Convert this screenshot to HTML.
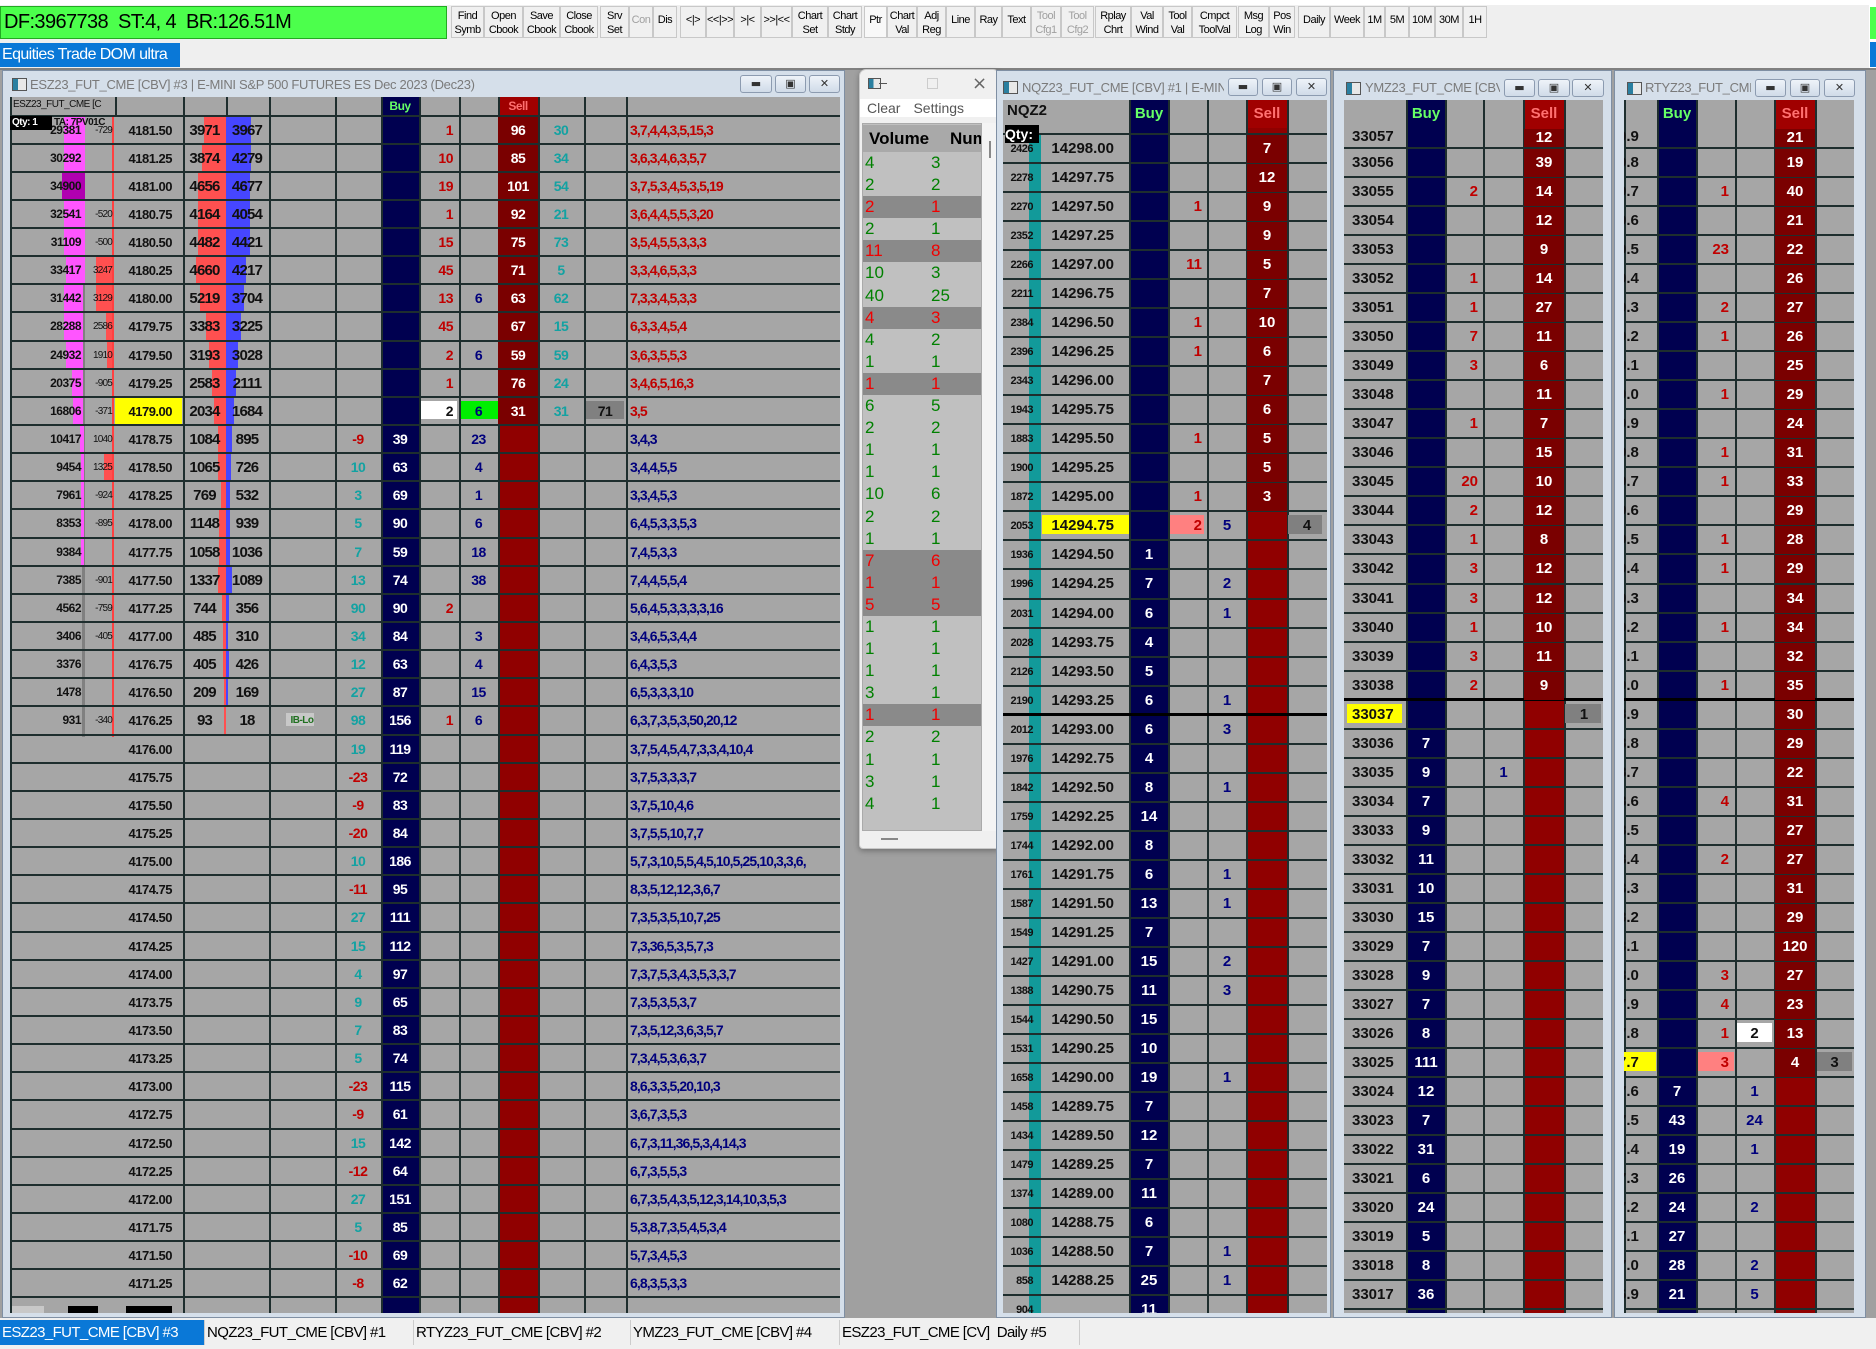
<!DOCTYPE html>
<html><head><meta charset="utf-8">
<style>
*{margin:0;padding:0}
body{width:1876px;height:1349px;position:relative;overflow:hidden;background:#efefef;font-family:"Liberation Sans",sans-serif}
.abs{position:absolute}
.tb{position:absolute;top:6px;height:32px;border:1px solid #c8c8c8;box-sizing:border-box;background:#f0f0f0;font:11px/14px "Liberation Sans",sans-serif;text-align:center;color:#000;padding-top:2px;overflow:hidden;letter-spacing:-0.5px;white-space:nowrap}
.tb.gr{color:#a0a0a0}
.tb.one{line-height:26px;padding-top:0}
.frame{position:absolute;background:#d5dfea;border:1px solid #7f8fa3;box-sizing:border-box}
.ttl{position:absolute;font:13px "Liberation Sans",sans-serif;color:#7a7a7a;white-space:nowrap;overflow:hidden;letter-spacing:-0.3px}
.ico{position:absolute;width:13px;height:11px;border:1px solid #555;background:linear-gradient(90deg,#2a7fa0 40%,#e8e8e8 40%)}
.wb{position:absolute;height:18px;border:1px solid #8c9bb0;border-radius:3px;background:linear-gradient(#eef3f9,#d0dbe8);box-sizing:border-box;font:bold 11px/16px "DejaVu Sans",sans-serif;text-align:center;color:#333}
.g{position:absolute;overflow:hidden;background:#a6a6a6;font-family:"Liberation Sans",sans-serif;font-weight:bold;color:#111;letter-spacing:-0.5px}
.v{position:absolute;top:0;bottom:0;width:2px;background:#1e2e2e}
.cb{position:absolute;top:0;bottom:0}
.rows{position:absolute;left:0;right:0}
.r{position:relative;height:28.15px;box-sizing:border-box;border-bottom:2px solid #1e2e2e}
.q{position:relative;height:29.04px;box-sizing:border-box;border-bottom:2px solid #1e2e2e}
.r b,.q b{position:absolute;top:0;line-height:27px;font-size:14px;white-space:nowrap}
.q b{line-height:28px;font-size:15px;letter-spacing:0}
s{position:absolute;top:0;bottom:0;display:block;text-decoration:none}
.mg{background:#ff55ff}.rb{background:#ff5050}.bb{background:#4646ff}
.rd{color:#c00000}.tl{color:#13a2a2}.nv{color:#00007c}.w{color:#fff}
.m0{left:0;width:71px;text-align:right;font-size:12px!important}
.m1{left:73px;width:29px;text-align:right;font-size:10px!important;font-weight:normal;letter-spacing:-0.8px}
.m2{left:103px;width:59px;text-align:right;font-size:13px!important}
.m3{left:173px;width:43px;text-align:center;font-size:15px!important;letter-spacing:-0.8px}
.m4{left:217px;width:40px;text-align:center;font-size:15px!important;letter-spacing:-0.8px}
.m5{left:259px;width:66px;text-align:center}
.m6{left:325px;width:46px;text-align:center}
.m7{left:371px;width:38px;text-align:center}
.m8{left:409px;width:34px;text-align:right}
.m9{left:449px;width:39px;text-align:center}
.m10{left:488px;width:40px;text-align:center;top:0;bottom:0}
.m11{left:528px;width:46px;text-align:center}
.m12{left:574px;width:42px;text-align:center}
.m13{left:620px;width:210px;text-align:left;overflow:hidden;letter-spacing:-0.9px}
.sv{background:#7a0000}
.n0{left:0;width:30px;text-align:right;font-size:11px!important;letter-spacing:-0.5px!important}
.n1{left:38px;width:73px;text-align:right;font-size:15px!important}
.n2{left:127px;width:38px;text-align:center}
.n3{left:166px;width:33px;text-align:right}
.n4{left:204px;width:40px;text-align:center}
.n5{left:244px;width:40px;text-align:center}
.n6{left:284px;width:40px;text-align:center}
.y0{left:8px;width:55px;text-align:left;font-size:15px!important}
.y1{left:63px;width:38px;text-align:center}
.y2{left:102px;width:32px;text-align:right}
.y3{left:140px;width:39px;text-align:center}
.y4{left:180px;width:40px;text-align:center}
.y5{left:221px;width:38px;text-align:center}
.t0{left:-6px;width:40px;text-align:left;font-size:15px!important}
.t1{left:34px;width:38px;text-align:center}
.t2{left:73px;width:32px;text-align:right}
.t3{left:111px;width:39px;text-align:center}
.t4{left:151px;width:40px;text-align:center}
.t5{left:191px;width:39px;text-align:center}
.pl{height:22.1px;font:17px/22px "Liberation Sans",sans-serif;color:#008000;background:#c0c0c0;position:relative}
.pl.d{background:#8a8a8a;color:#f00000}
.pl span{position:absolute;left:2px}
.pl span+span{left:68px}
.tab{position:absolute;top:1320px;height:25px;font:15px/25px "Liberation Sans",sans-serif;letter-spacing:-0.6px;border-right:1px solid #ccc;box-sizing:border-box;white-space:nowrap;overflow:hidden;padding-left:2px}
</style></head><body>

<div class="abs" style="left:0;top:0;width:1876px;height:5px;background:#fff"></div>
<div class="abs" style="left:0;top:6px;width:447px;height:33px;background:#4cff4c;border:1px solid #2a2;box-sizing:border-box;font:20px/31px 'Liberation Sans',sans-serif;letter-spacing:-0.6px;padding-left:3px">DF:3967738&nbsp; ST:4, 4&nbsp; BR:126.51M</div>
<div class="tb" style="left:451px;width:33px">Find<br>Symb</div>
<div class="tb" style="left:484px;width:39px">Open<br>Cbook</div>
<div class="tb" style="left:523px;width:37px">Save<br>Cbook</div>
<div class="tb" style="left:560px;width:38px">Close<br>Cbook</div>
<div class="tb" style="left:600px;width:29px">Srv<br>Set</div>
<div class="tb gr one" style="left:629px;width:24px">Con</div>
<div class="tb one" style="left:653px;width:24px">Dis</div>
<div class="tb one" style="left:680px;width:26px">&lt;|&gt;</div>
<div class="tb one" style="left:706px;width:28px">&lt;&lt;|&gt;&gt;</div>
<div class="tb one" style="left:734px;width:27px">&gt;|&lt;</div>
<div class="tb one" style="left:761px;width:31px">&gt;&gt;|&lt;&lt;</div>
<div class="tb" style="left:792px;width:36px">Chart<br>Set</div>
<div class="tb" style="left:828px;width:34px">Chart<br>Stdy</div>
<div class="tb one" style="left:864px;width:23px;background:#f8f8f8">Ptr</div>
<div class="tb" style="left:887px;width:30px">Chart<br>Val</div>
<div class="tb" style="left:917px;width:29px">Adj<br>Reg</div>
<div class="tb one" style="left:946px;width:29px">Line</div>
<div class="tb one" style="left:975px;width:27px">Ray</div>
<div class="tb one" style="left:1002px;width:29px">Text</div>
<div class="tb gr" style="left:1031px;width:30px">Tool<br>Cfg1</div>
<div class="tb gr" style="left:1061px;width:33px">Tool<br>Cfg2</div>
<div class="tb" style="left:1095px;width:36px">Rplay<br>Chrt</div>
<div class="tb" style="left:1131px;width:32px">Val<br>Wind</div>
<div class="tb" style="left:1163px;width:29px">Tool<br>Val</div>
<div class="tb" style="left:1192px;width:45px">Cmpct<br>ToolVal</div>
<div class="tb" style="left:1238px;width:31px">Msg<br>Log</div>
<div class="tb" style="left:1269px;width:26px">Pos<br>Win</div>
<div class="tb one" style="left:1298px;width:32px">Daily</div>
<div class="tb one" style="left:1330px;width:34px">Week</div>
<div class="tb one" style="left:1364px;width:21px">1M</div>
<div class="tb one" style="left:1385px;width:24px">5M</div>
<div class="tb one" style="left:1409px;width:26px">10M</div>
<div class="tb one" style="left:1435px;width:28px">30M</div>
<div class="tb one" style="left:1463px;width:24px">1H</div>
<div class="abs" style="left:0;top:43px;width:180px;height:24px;background:#0a78d7;color:#fff;font:16px/24px 'Liberation Sans',sans-serif;letter-spacing:-0.6px;padding-left:2px;white-space:nowrap;overflow:hidden;box-sizing:border-box">Equities Trade DOM ultra</div>
<div class="abs" style="left:1869px;top:0;width:7px;height:68px;background:#fff"></div>
<div class="abs" style="left:1870px;top:7px;width:6px;height:32px;background:#4cff4c"></div>
<div class="abs" style="left:1870px;top:42px;width:6px;height:25px;background:#0a78d7"></div>

<div class="abs" style="left:0;top:68px;width:1876px;height:1250px;background:#a0a0a0;border-top:2px solid #808080"></div>

<!-- MAIN WINDOW -->
<div class="frame" style="left:2px;top:70px;width:843px;height:1248px"></div>
<div class="ico" style="left:12px;top:78px"></div>
<div class="ttl" style="left:30px;top:77px;width:700px">ESZ23_FUT_CME [CBV] #3 | E-MINI S&amp;P 500 FUTURES ES Dec 2023 (Dec23)</div>
<div class="wb" style="left:740px;top:75px;width:32px">&#9644;</div>
<div class="wb" style="left:775px;top:75px;width:31px">&#9635;</div>
<div class="wb" style="left:809px;top:75px;width:31px">&#10005;</div>

<div class="g" style="left:10px;top:97px;width:830px;height:1216px">
 <div class="cb" style="left:371px;width:38px;background:#000050"></div>
 <div class="cb" style="left:488px;width:40px;background:#900000"></div>
 <div class="abs" style="left:488px;top:0;width:40px;height:18px;background:#a00000;color:#ff7070;font-size:12px;line-height:18px;text-align:center">Sell</div>
 <div class="abs" style="left:371px;top:0;width:38px;height:18px;color:#66ff66;font-size:12px;line-height:18px;text-align:center">Buy</div>
 <div class="abs" style="left:0;top:0;width:830px;height:18px;border-bottom:2px solid #1e2e2e"></div>
 <div class="abs" style="left:3px;top:1px;font-size:10px;line-height:14px;font-weight:normal">ESZ23_FUT_CME [C</div>
 <div class="abs" style="left:102px;top:19.5px;width:2px;height:620px;background:#ff4040"></div>
 <div class="abs" style="left:72px;top:19.5px;width:3px;height:620px;background:#808080"></div>
 <div class="v" style="left:0"></div><div class="v" style="left:173px"></div><div class="v" style="left:259px"></div><div class="v" style="left:325px"></div><div class="v" style="left:371px"></div><div class="v" style="left:409px"></div><div class="v" style="left:449px"></div><div class="v" style="left:488px"></div><div class="v" style="left:528px"></div><div class="v" style="left:574px"></div><div class="v" style="left:616px"></div>
 <div class="abs" style="left:105px;top:0;width:2px;height:18px;background:#1e2e2e"></div>
 <div class="abs" style="left:216px;top:0;width:2px;height:18px;background:#1e2e2e"></div>
 <div class="rows" style="top:19.5px">
<div class="r"><s class="mg" style="left:54px;width:21px"></s><s class="rb" style="left:194px;width:22px"></s><s class="bb" style="left:216px;width:25px"></s><b class="m0">29381</b><b class="m1">-729</b><b class="m2">4181.50</b><b class="m3">3971</b><b class="m4">3967</b><b class="m8 rd">1</b><b class="m10 w sv">96</b><b class="m11 tl">30</b><b class="m13 rd">3,7,4,4,3,5,15,3</b></div>
<div class="r"><s class="mg" style="left:54px;width:21px"></s><s class="rb" style="left:192px;width:24px"></s><s class="bb" style="left:216px;width:25px"></s><b class="m0">30292</b><b class="m2">4181.25</b><b class="m3">3874</b><b class="m4">4279</b><b class="m8 rd">10</b><b class="m10 w sv">85</b><b class="m11 tl">34</b><b class="m13 rd">3,6,3,4,6,3,5,7</b></div>
<div class="r"><s style="left:52px;width:23px;background:#b000b0"></s><s class="rb" style="left:188px;width:28px"></s><s class="bb" style="left:216px;width:24px"></s><b class="m0">34900</b><b class="m2">4181.00</b><b class="m3">4656</b><b class="m4">4677</b><b class="m8 rd">19</b><b class="m10 w sv">101</b><b class="m11 tl">54</b><b class="m13 rd">3,7,5,3,4,5,3,5,19</b></div>
<div class="r"><s class="mg" style="left:54px;width:21px"></s><s class="rb" style="left:188px;width:28px"></s><s class="bb" style="left:216px;width:24px"></s><b class="m0">32541</b><b class="m1">-520</b><b class="m2">4180.75</b><b class="m3">4164</b><b class="m4">4054</b><b class="m8 rd">1</b><b class="m10 w sv">92</b><b class="m11 tl">21</b><b class="m13 rd">3,6,4,4,5,5,3,20</b></div>
<div class="r"><s class="mg" style="left:54px;width:21px"></s><s class="rb" style="left:188px;width:28px"></s><s class="bb" style="left:216px;width:24px"></s><b class="m0">31109</b><b class="m1">-500</b><b class="m2">4180.50</b><b class="m3">4482</b><b class="m4">4421</b><b class="m8 rd">15</b><b class="m10 w sv">75</b><b class="m11 tl">73</b><b class="m13 rd">3,5,4,5,5,3,3,3</b></div>
<div class="r"><s class="mg" style="left:56px;width:19px"></s><s class="rb" style="left:86px;width:16px"></s><s class="rb" style="left:186px;width:30px"></s><s class="bb" style="left:216px;width:20px"></s><b class="m0">33417</b><b class="m1">3247</b><b class="m2">4180.25</b><b class="m3">4660</b><b class="m4">4217</b><b class="m8 rd">45</b><b class="m10 w sv">71</b><b class="m11 tl">5</b><b class="m13 rd">3,3,4,6,5,3,3</b></div>
<div class="r"><s class="mg" style="left:54px;width:19px"></s><s class="rb" style="left:86px;width:16px"></s><s class="rb" style="left:190px;width:26px"></s><s class="bb" style="left:216px;width:18px"></s><b class="m0">31442</b><b class="m1">3129</b><b class="m2">4180.00</b><b class="m3">5219</b><b class="m4">3704</b><b class="m8 rd">13</b><b class="m9 nv">6</b><b class="m10 w sv">63</b><b class="m11 tl">62</b><b class="m13 rd">7,3,3,4,5,3,3</b></div>
<div class="r"><s class="mg" style="left:54px;width:19px"></s><s class="rb" style="left:96px;width:6px"></s><s class="rb" style="left:196px;width:20px"></s><s class="bb" style="left:216px;width:15px"></s><b class="m0">28288</b><b class="m1">2586</b><b class="m2">4179.75</b><b class="m3">3383</b><b class="m4">3225</b><b class="m8 rd">45</b><b class="m10 w sv">67</b><b class="m11 tl">15</b><b class="m13 rd">6,3,3,4,5,4</b></div>
<div class="r"><s class="mg" style="left:56px;width:17px"></s><s class="rb" style="left:97px;width:5px"></s><s class="rb" style="left:199px;width:17px"></s><s class="bb" style="left:216px;width:12px"></s><b class="m0">24932</b><b class="m1">1910</b><b class="m2">4179.50</b><b class="m3">3193</b><b class="m4">3028</b><b class="m8 rd">2</b><b class="m9 nv">6</b><b class="m10 w sv">59</b><b class="m11 tl">59</b><b class="m13 rd">3,6,3,5,5,3</b></div>
<div class="r"><s class="mg" style="left:62px;width:11px"></s><s class="rb" style="left:202px;width:14px"></s><s class="bb" style="left:216px;width:10px"></s><b class="m0">20375</b><b class="m1">-905</b><b class="m2">4179.25</b><b class="m3">2583</b><b class="m4">2111</b><b class="m8 rd">1</b><b class="m10 w sv">76</b><b class="m11 tl">24</b><b class="m13 rd">3,4,6,5,16,3</b></div>
<div class="r"><s class="mg" style="left:63px;width:10px"></s><s class="rb" style="left:204px;width:12px"></s><s class="bb" style="left:216px;width:8px"></s><s style="left:105px;width:67px;background:#ffff00"></s><s style="left:411px;width:36px;top:3px;bottom:5px;background:#fff"></s><s style="left:451px;width:37px;top:3px;bottom:5px;background:#00ee00"></s><s style="left:576px;width:38px;top:3px;bottom:5px;background:#808080"></s><b class="m0">16806</b><b class="m1">-371</b><b class="m2">4179.00</b><b class="m3">2034</b><b class="m4">1684</b><b class="m8">2</b><b class="m9 nv">6</b><b class="m10 w sv">31</b><b class="m11 tl">31</b><b class="m12">71</b><b class="m13 rd">3,5</b></div>
<div class="r"><s class="mg" style="left:70px;width:4px"></s><s class="rb" style="left:208px;width:8px"></s><s class="bb" style="left:216px;width:6px"></s><b class="m0">10417</b><b class="m1">1040</b><b class="m2">4178.75</b><b class="m3">1084</b><b class="m4">895</b><b class="m6 rd">-9</b><b class="m7 w">39</b><b class="m9 nv">23</b><b class="m13 nv">3,4,3</b></div>
<div class="r"><s class="mg" style="left:71px;width:3px"></s><s class="rb" style="left:94px;width:8px"></s><s class="rb" style="left:208px;width:8px"></s><s class="bb" style="left:216px;width:5px"></s><b class="m0">9454</b><b class="m1">1325</b><b class="m2">4178.50</b><b class="m3">1065</b><b class="m4">726</b><b class="m6 tl">10</b><b class="m7 w">63</b><b class="m9 nv">4</b><b class="m13 nv">3,4,4,5,5</b></div>
<div class="r"><s class="mg" style="left:71px;width:3px"></s><s class="rb" style="left:211px;width:5px"></s><s class="bb" style="left:216px;width:4px"></s><b class="m0">7961</b><b class="m1">-924</b><b class="m2">4178.25</b><b class="m3">769</b><b class="m4">532</b><b class="m6 tl">3</b><b class="m7 w">69</b><b class="m9 nv">1</b><b class="m13 nv">3,3,4,5,3</b></div>
<div class="r"><s class="mg" style="left:71px;width:3px"></s><s class="rb" style="left:209px;width:7px"></s><s class="bb" style="left:216px;width:4px"></s><b class="m0">8353</b><b class="m1">-895</b><b class="m2">4178.00</b><b class="m3">1148</b><b class="m4">939</b><b class="m6 tl">5</b><b class="m7 w">90</b><b class="m9 nv">6</b><b class="m13 nv">6,4,5,3,3,5,3</b></div>
<div class="r"><s class="mg" style="left:71px;width:3px"></s><s class="rb" style="left:209px;width:7px"></s><s class="bb" style="left:216px;width:4px"></s><b class="m0">9384</b><b class="m2">4177.75</b><b class="m3">1058</b><b class="m4">1036</b><b class="m6 tl">7</b><b class="m7 w">59</b><b class="m9 nv">18</b><b class="m13 nv">7,4,5,3,3</b></div>
<div class="r"><s class="rb" style="left:208px;width:8px"></s><s class="bb" style="left:216px;width:6px"></s><b class="m0">7385</b><b class="m1">-901</b><b class="m2">4177.50</b><b class="m3">1337</b><b class="m4">1089</b><b class="m6 tl">13</b><b class="m7 w">74</b><b class="m9 nv">38</b><b class="m13 nv">7,4,4,5,5,4</b></div>
<div class="r"><s class="rb" style="left:212px;width:4px"></s><s class="bb" style="left:216px;width:3px"></s><b class="m0">4562</b><b class="m1">-759</b><b class="m2">4177.25</b><b class="m3">744</b><b class="m4">356</b><b class="m6 tl">90</b><b class="m7 w">90</b><b class="m8 rd">2</b><b class="m13 nv">5,6,4,5,3,3,3,3,16</b></div>
<div class="r"><s class="rb" style="left:213px;width:3px"></s><s class="bb" style="left:216px;width:2px"></s><b class="m0">3406</b><b class="m1">-405</b><b class="m2">4177.00</b><b class="m3">485</b><b class="m4">310</b><b class="m6 tl">34</b><b class="m7 w">84</b><b class="m9 nv">3</b><b class="m13 nv">3,4,6,5,3,4,4</b></div>
<div class="r"><s class="rb" style="left:213px;width:3px"></s><s class="bb" style="left:216px;width:3px"></s><b class="m0">3376</b><b class="m2">4176.75</b><b class="m3">405</b><b class="m4">426</b><b class="m6 tl">12</b><b class="m7 w">63</b><b class="m9 nv">4</b><b class="m13 nv">6,4,3,5,3</b></div>
<div class="r"><s class="rb" style="left:214px;width:2px"></s><s class="bb" style="left:216px;width:2px"></s><b class="m0">1478</b><b class="m2">4176.50</b><b class="m3">209</b><b class="m4">169</b><b class="m6 tl">27</b><b class="m7 w">87</b><b class="m9 nv">15</b><b class="m13 nv">6,5,3,3,3,10</b></div>
<div class="r"><s class="rb" style="left:214px;width:2px"></s><s style="left:276px;width:28px;top:6px;bottom:8px;background:#c8c8c8"></s><b class="m0">931</b><b class="m1">-340</b><b class="m2">4176.25</b><b class="m3">93</b><b class="m4">18</b><b class="m5" style="font-size:10px;color:#207020">IB-Lo</b><b class="m6 tl">98</b><b class="m7 w">156</b><b class="m8 rd">1</b><b class="m9 nv">6</b><b class="m13 nv">6,3,7,3,5,3,50,20,12</b></div>
<div class="r"><b class="m2">4176.00</b><b class="m6 tl">19</b><b class="m7 w">119</b><b class="m13 nv">3,7,5,4,5,4,7,3,3,4,10,4</b></div>
<div class="r"><b class="m2">4175.75</b><b class="m6 rd">-23</b><b class="m7 w">72</b><b class="m13 nv">3,7,5,3,3,3,7</b></div>
<div class="r"><b class="m2">4175.50</b><b class="m6 rd">-9</b><b class="m7 w">83</b><b class="m13 nv">3,7,5,10,4,6</b></div>
<div class="r"><b class="m2">4175.25</b><b class="m6 rd">-20</b><b class="m7 w">84</b><b class="m13 nv">3,7,5,5,10,7,7</b></div>
<div class="r"><b class="m2">4175.00</b><b class="m6 tl">10</b><b class="m7 w">186</b><b class="m13 nv">5,7,3,10,5,5,4,5,10,5,25,10,3,3,6,</b></div>
<div class="r"><b class="m2">4174.75</b><b class="m6 rd">-11</b><b class="m7 w">95</b><b class="m13 nv">8,3,5,12,12,3,6,7</b></div>
<div class="r"><b class="m2">4174.50</b><b class="m6 tl">27</b><b class="m7 w">111</b><b class="m13 nv">7,3,5,3,5,10,7,25</b></div>
<div class="r"><b class="m2">4174.25</b><b class="m6 tl">15</b><b class="m7 w">112</b><b class="m13 nv">7,3,36,5,3,5,7,3</b></div>
<div class="r"><b class="m2">4174.00</b><b class="m6 tl">4</b><b class="m7 w">97</b><b class="m13 nv">7,3,7,5,3,4,3,5,3,3,7</b></div>
<div class="r"><b class="m2">4173.75</b><b class="m6 tl">9</b><b class="m7 w">65</b><b class="m13 nv">7,3,5,3,5,3,7</b></div>
<div class="r"><b class="m2">4173.50</b><b class="m6 tl">7</b><b class="m7 w">83</b><b class="m13 nv">7,3,5,12,3,6,3,5,7</b></div>
<div class="r"><b class="m2">4173.25</b><b class="m6 tl">5</b><b class="m7 w">74</b><b class="m13 nv">7,3,4,5,3,6,3,7</b></div>
<div class="r"><b class="m2">4173.00</b><b class="m6 rd">-23</b><b class="m7 w">115</b><b class="m13 nv">8,6,3,3,5,20,10,3</b></div>
<div class="r"><b class="m2">4172.75</b><b class="m6 rd">-9</b><b class="m7 w">61</b><b class="m13 nv">3,6,7,3,5,3</b></div>
<div class="r"><b class="m2">4172.50</b><b class="m6 tl">15</b><b class="m7 w">142</b><b class="m13 nv">6,7,3,11,36,5,3,4,14,3</b></div>
<div class="r"><b class="m2">4172.25</b><b class="m6 rd">-12</b><b class="m7 w">64</b><b class="m13 nv">6,7,3,5,5,3</b></div>
<div class="r"><b class="m2">4172.00</b><b class="m6 tl">27</b><b class="m7 w">151</b><b class="m13 nv">6,7,3,5,4,3,5,12,3,14,10,3,5,3</b></div>
<div class="r"><b class="m2">4171.75</b><b class="m6 tl">5</b><b class="m7 w">85</b><b class="m13 nv">5,3,8,7,3,5,4,5,3,4</b></div>
<div class="r"><b class="m2">4171.50</b><b class="m6 rd">-10</b><b class="m7 w">69</b><b class="m13 nv">5,7,3,4,5,3</b></div>
<div class="r"><b class="m2">4171.25</b><b class="m6 rd">-8</b><b class="m7 w">62</b><b class="m13 nv">6,8,3,5,3,3</b></div>
<div class="r"><s style="left:2px;width:32px;top:8px;background:#c8c8c8"></s><s style="left:58px;width:30px;top:8px;background:#000"></s><s style="left:116px;width:46px;top:8px;background:#000"></s><b class="m6 tl" style="top:7px">123</b><b class="m7 w" style="top:7px">255</b><b class="m13 nv" style="top:7px">5,20,5,7,3,6,10,4,3,10,10,100,5,4</b></div>
 </div>
 <div class="abs" style="left:0;top:19px;width:40px;height:14px;background:#000;color:#fff;font-size:10px;line-height:14px;padding-left:2px">Qty: 1</div>
 <div class="abs" style="left:44px;top:19px;font-size:10px;line-height:14px;color:#111">TA: 7PV01C</div>
</div>

<!-- POPUP -->
<div class="abs" style="left:859px;top:69px;width:141px;height:780px;background:#f0f0f0;border:1px solid #c8c8c8;box-sizing:border-box;border-radius:7px 7px 4px 4px;box-shadow:0 2px 6px rgba(0,0,0,.3)"></div>
<div class="ico" style="left:868px;top:78px;width:11px;height:9px"></div>
<div class="abs" style="left:879px;top:83px;width:8px;height:1px;background:#555"></div>
<div class="abs" style="left:927px;top:78px;width:9px;height:9px;border:1px solid #ccc"></div>
<div class="abs" style="left:972px;top:73px;font:18px 'DejaVu Sans',sans-serif;color:#666">&#215;</div>
<div class="abs" style="left:860px;top:99px;width:139px;height:18px;background:#fff;font:14px/18px 'Liberation Sans',sans-serif;color:#555"><span style="margin-left:7px">Clear</span><span style="margin-left:13px">Settings</span></div>
<div class="abs" style="left:862px;top:123px;width:120px;height:708px;background:#c0c0c0;border:1px solid #aaa;box-sizing:border-box"></div>
<div class="abs" style="left:982px;top:123px;width:14px;height:708px;background:#f4f4f4"></div>
<div class="abs" style="left:989px;top:141px;width:2px;height:17px;background:#888"></div>
<div class="abs" style="left:863px;top:125px;width:118px;height:27px;background:#a9a9a9;font:bold 17px/27px 'Liberation Sans',sans-serif;color:#000;overflow:hidden;white-space:nowrap"><span style="margin-left:6px">Volume</span><span style="position:absolute;left:87px">Num</span></div>
<div class="abs" style="left:863px;top:152px;width:118px;overflow:hidden">
<div class="pl"><span>4</span><span>3</span></div><div class="pl"><span>2</span><span>2</span></div><div class="pl d"><span>2</span><span>1</span></div><div class="pl"><span>2</span><span>1</span></div><div class="pl d"><span>11</span><span>8</span></div><div class="pl"><span>10</span><span>3</span></div><div class="pl"><span>40</span><span>25</span></div><div class="pl d"><span>4</span><span>3</span></div><div class="pl"><span>4</span><span>2</span></div><div class="pl"><span>1</span><span>1</span></div><div class="pl d"><span>1</span><span>1</span></div><div class="pl"><span>6</span><span>5</span></div><div class="pl"><span>2</span><span>2</span></div><div class="pl"><span>1</span><span>1</span></div><div class="pl"><span>1</span><span>1</span></div><div class="pl"><span>10</span><span>6</span></div><div class="pl"><span>2</span><span>2</span></div><div class="pl"><span>1</span><span>1</span></div><div class="pl d"><span>7</span><span>6</span></div><div class="pl d"><span>1</span><span>1</span></div><div class="pl d"><span>5</span><span>5</span></div><div class="pl"><span>1</span><span>1</span></div><div class="pl"><span>1</span><span>1</span></div><div class="pl"><span>1</span><span>1</span></div><div class="pl"><span>3</span><span>1</span></div><div class="pl d"><span>1</span><span>1</span></div><div class="pl"><span>2</span><span>2</span></div><div class="pl"><span>1</span><span>1</span></div><div class="pl"><span>3</span><span>1</span></div><div class="pl"><span>4</span><span>1</span></div>
</div>
<div class="abs" style="left:881px;top:838px;width:17px;height:2px;background:#888"></div>

<!-- NQ WINDOW -->
<div class="frame" style="left:996px;top:70px;width:335px;height:1248px"></div>
<div class="ico" style="left:1003px;top:81px"></div>
<div class="ttl" style="left:1022px;top:80px;width:202px">NQZ23_FUT_CME [CBV] #1 | E-MINI ...</div>
<div class="wb" style="left:1228px;top:78px;width:30px">&#9644;</div>
<div class="wb" style="left:1262px;top:78px;width:30px">&#9635;</div>
<div class="wb" style="left:1296px;top:78px;width:31px">&#10005;</div>
<div class="g" style="left:1003px;top:100px;width:324px;height:1213px;letter-spacing:0">
 <div class="cb" style="left:26px;width:12px;top:35px;background:#129a9a"></div>
 <div class="cb" style="left:127px;width:38px;background:#000050"></div>
 <div class="cb" style="left:244px;width:40px;background:#900000"></div>
 <div class="abs" style="left:244px;top:0;width:40px;height:28px;background:#a00000;color:#ff7070;font-size:15px;line-height:28px;text-align:center">Sell</div>
 <div class="abs" style="left:127px;top:0;width:38px;height:33px;color:#66ff66;font-size:15px;line-height:28px;text-align:center">Buy</div>
 <div class="abs" style="left:0;top:0;width:324px;height:35px;border-bottom:2px solid #1e2e2e;box-sizing:border-box"></div>
 <div class="abs" style="left:4px;top:2px;font-size:15px">NQZ2</div>
 <div class="v" style="left:126px"></div><div class="v" style="left:165px"></div><div class="v" style="left:204px"></div><div class="v" style="left:243px"></div><div class="v" style="left:284px"></div>
 <div class="rows" style="top:35px">
<div class="q"><b class="n0">2426</b><b class="n1">14298.00</b><b class="n5 w sv">7</b></div>
<div class="q"><b class="n0">2278</b><b class="n1">14297.75</b><b class="n5 w sv">12</b></div>
<div class="q"><b class="n0">2270</b><b class="n1">14297.50</b><b class="n3 rd">1</b><b class="n5 w sv">9</b></div>
<div class="q"><b class="n0">2352</b><b class="n1">14297.25</b><b class="n5 w sv">9</b></div>
<div class="q"><b class="n0">2266</b><b class="n1">14297.00</b><b class="n3 rd">11</b><b class="n5 w sv">5</b></div>
<div class="q"><b class="n0">2211</b><b class="n1">14296.75</b><b class="n5 w sv">7</b></div>
<div class="q"><b class="n0">2384</b><b class="n1">14296.50</b><b class="n3 rd">1</b><b class="n5 w sv">10</b></div>
<div class="q"><b class="n0">2396</b><b class="n1">14296.25</b><b class="n3 rd">1</b><b class="n5 w sv">6</b></div>
<div class="q"><b class="n0">2343</b><b class="n1">14296.00</b><b class="n5 w sv">7</b></div>
<div class="q"><b class="n0">1943</b><b class="n1">14295.75</b><b class="n5 w sv">6</b></div>
<div class="q"><b class="n0">1883</b><b class="n1">14295.50</b><b class="n3 rd">1</b><b class="n5 w sv">5</b></div>
<div class="q"><b class="n0">1900</b><b class="n1">14295.25</b><b class="n5 w sv">5</b></div>
<div class="q"><b class="n0">1872</b><b class="n1">14295.00</b><b class="n3 rd">1</b><b class="n5 w sv">3</b></div>
<div class="q"><s style="left:39px;width:87px;top:3px;bottom:5px;background:#ffff00"></s><s style="left:167px;width:34px;top:3px;bottom:5px;background:#ff8080"></s><s style="left:285px;width:34px;top:3px;bottom:5px;background:#808080"></s><b class="n0">2053</b><b class="n1">14294.75</b><b class="n3 rd">2</b><b class="n4 nv">5</b><b class="n6">4</b></div>
<div class="q"><b class="n0">1936</b><b class="n1">14294.50</b><b class="n2 w">1</b></div>
<div class="q"><b class="n0">1996</b><b class="n1">14294.25</b><b class="n2 w">7</b><b class="n4 nv">2</b></div>
<div class="q"><b class="n0">2031</b><b class="n1">14294.00</b><b class="n2 w">6</b><b class="n4 nv">1</b></div>
<div class="q"><b class="n0">2028</b><b class="n1">14293.75</b><b class="n2 w">4</b></div>
<div class="q"><b class="n0">2126</b><b class="n1">14293.50</b><b class="n2 w">5</b></div>
<div class="q" style="border-bottom:3px solid #000"><b class="n0">2190</b><b class="n1">14293.25</b><b class="n2 w">6</b><b class="n4 nv">1</b></div>
<div class="q"><b class="n0">2012</b><b class="n1">14293.00</b><b class="n2 w">6</b><b class="n4 nv">3</b></div>
<div class="q"><b class="n0">1976</b><b class="n1">14292.75</b><b class="n2 w">4</b></div>
<div class="q"><b class="n0">1842</b><b class="n1">14292.50</b><b class="n2 w">8</b><b class="n4 nv">1</b></div>
<div class="q"><b class="n0">1759</b><b class="n1">14292.25</b><b class="n2 w">14</b></div>
<div class="q"><b class="n0">1744</b><b class="n1">14292.00</b><b class="n2 w">8</b></div>
<div class="q"><b class="n0">1761</b><b class="n1">14291.75</b><b class="n2 w">6</b><b class="n4 nv">1</b></div>
<div class="q"><b class="n0">1587</b><b class="n1">14291.50</b><b class="n2 w">13</b><b class="n4 nv">1</b></div>
<div class="q"><b class="n0">1549</b><b class="n1">14291.25</b><b class="n2 w">7</b></div>
<div class="q"><b class="n0">1427</b><b class="n1">14291.00</b><b class="n2 w">15</b><b class="n4 nv">2</b></div>
<div class="q"><b class="n0">1388</b><b class="n1">14290.75</b><b class="n2 w">11</b><b class="n4 nv">3</b></div>
<div class="q"><b class="n0">1544</b><b class="n1">14290.50</b><b class="n2 w">15</b></div>
<div class="q"><b class="n0">1531</b><b class="n1">14290.25</b><b class="n2 w">10</b></div>
<div class="q"><b class="n0">1658</b><b class="n1">14290.00</b><b class="n2 w">19</b><b class="n4 nv">1</b></div>
<div class="q"><b class="n0">1458</b><b class="n1">14289.75</b><b class="n2 w">7</b></div>
<div class="q"><b class="n0">1434</b><b class="n1">14289.50</b><b class="n2 w">12</b></div>
<div class="q"><b class="n0">1479</b><b class="n1">14289.25</b><b class="n2 w">7</b></div>
<div class="q"><b class="n0">1374</b><b class="n1">14289.00</b><b class="n2 w">11</b></div>
<div class="q"><b class="n0">1080</b><b class="n1">14288.75</b><b class="n2 w">6</b></div>
<div class="q"><b class="n0">1036</b><b class="n1">14288.50</b><b class="n2 w">7</b><b class="n4 nv">1</b></div>
<div class="q"><b class="n0">858</b><b class="n1">14288.25</b><b class="n2 w">25</b><b class="n4 nv">1</b></div>
<div class="q"><b class="n0">904</b><b class="n2 w">11</b></div>
 </div>
 <div class="abs" style="left:2px;top:25px;width:34px;height:18px;background:#000;color:#fff;font-size:14px;line-height:18px;overflow:hidden">Qty: 1</div>
</div>

<!-- YM WINDOW -->
<div class="frame" style="left:1333px;top:70px;width:279px;height:1248px"></div>
<div class="ico" style="left:1346px;top:82px"></div>
<div class="ttl" style="left:1365px;top:80px;width:135px">YMZ23_FUT_CME [CBV]...</div>
<div class="wb" style="left:1504px;top:79px;width:31px">&#9644;</div>
<div class="wb" style="left:1538px;top:79px;width:32px">&#9635;</div>
<div class="wb" style="left:1572px;top:79px;width:32px">&#10005;</div>
<div class="g" style="left:1344px;top:100px;width:259px;height:1213px;letter-spacing:0">
 <div class="cb" style="left:63px;width:38px;background:#000050"></div>
 <div class="cb" style="left:180px;width:40px;background:#900000"></div>
 <div class="abs" style="left:180px;top:0;width:40px;height:29px;background:#a00000;color:#ff7070;font-size:15px;line-height:28px;text-align:center">Sell</div>
 <div class="abs" style="left:63px;top:0;width:38px;height:28px;color:#66ff66;font-size:15px;line-height:28px;text-align:center">Buy</div>
 <div class="v" style="left:62px"></div><div class="v" style="left:101px"></div><div class="v" style="left:139px"></div><div class="v" style="left:179px"></div><div class="v" style="left:220px"></div>
 <div class="rows" style="top:20px">
<div class="q"><b class="y0" style="top:3px">33057</b><b class="y4 w sv" style="top:9px;line-height:18px">12</b></div>
<div class="q"><b class="y0">33056</b><b class="y4 w sv">39</b></div>
<div class="q"><b class="y0">33055</b><b class="y2 rd">2</b><b class="y4 w sv">14</b></div>
<div class="q"><b class="y0">33054</b><b class="y4 w sv">12</b></div>
<div class="q"><b class="y0">33053</b><b class="y4 w sv">9</b></div>
<div class="q"><b class="y0">33052</b><b class="y2 rd">1</b><b class="y4 w sv">14</b></div>
<div class="q"><b class="y0">33051</b><b class="y2 rd">1</b><b class="y4 w sv">27</b></div>
<div class="q"><b class="y0">33050</b><b class="y2 rd">7</b><b class="y4 w sv">11</b></div>
<div class="q"><b class="y0">33049</b><b class="y2 rd">3</b><b class="y4 w sv">6</b></div>
<div class="q"><b class="y0">33048</b><b class="y4 w sv">11</b></div>
<div class="q"><b class="y0">33047</b><b class="y2 rd">1</b><b class="y4 w sv">7</b></div>
<div class="q"><b class="y0">33046</b><b class="y4 w sv">15</b></div>
<div class="q"><b class="y0">33045</b><b class="y2 rd">20</b><b class="y4 w sv">10</b></div>
<div class="q"><b class="y0">33044</b><b class="y2 rd">2</b><b class="y4 w sv">12</b></div>
<div class="q"><b class="y0">33043</b><b class="y2 rd">1</b><b class="y4 w sv">8</b></div>
<div class="q"><b class="y0">33042</b><b class="y2 rd">3</b><b class="y4 w sv">12</b></div>
<div class="q"><b class="y0">33041</b><b class="y2 rd">3</b><b class="y4 w sv">12</b></div>
<div class="q"><b class="y0">33040</b><b class="y2 rd">1</b><b class="y4 w sv">10</b></div>
<div class="q"><b class="y0">33039</b><b class="y2 rd">3</b><b class="y4 w sv">11</b></div>
<div class="q" style="border-bottom:3px solid #000"><b class="y0">33038</b><b class="y2 rd">2</b><b class="y4 w sv">9</b></div>
<div class="q"><s style="left:3px;width:55px;top:3px;bottom:5px;background:#ffff00"></s><s style="left:221px;width:36px;top:3px;bottom:5px;background:#808080"></s><b class="y0">33037</b><b class="y5">1</b></div>
<div class="q"><b class="y0">33036</b><b class="y1 w">7</b></div>
<div class="q"><b class="y0">33035</b><b class="y1 w">9</b><b class="y3 nv">1</b></div>
<div class="q"><b class="y0">33034</b><b class="y1 w">7</b></div>
<div class="q"><b class="y0">33033</b><b class="y1 w">9</b></div>
<div class="q"><b class="y0">33032</b><b class="y1 w">11</b></div>
<div class="q"><b class="y0">33031</b><b class="y1 w">10</b></div>
<div class="q"><b class="y0">33030</b><b class="y1 w">15</b></div>
<div class="q"><b class="y0">33029</b><b class="y1 w">7</b></div>
<div class="q"><b class="y0">33028</b><b class="y1 w">9</b></div>
<div class="q"><b class="y0">33027</b><b class="y1 w">7</b></div>
<div class="q"><b class="y0">33026</b><b class="y1 w">8</b></div>
<div class="q"><b class="y0">33025</b><b class="y1 w">111</b></div>
<div class="q"><b class="y0">33024</b><b class="y1 w">12</b></div>
<div class="q"><b class="y0">33023</b><b class="y1 w">7</b></div>
<div class="q"><b class="y0">33022</b><b class="y1 w">31</b></div>
<div class="q"><b class="y0">33021</b><b class="y1 w">6</b></div>
<div class="q"><b class="y0">33020</b><b class="y1 w">24</b></div>
<div class="q"><b class="y0">33019</b><b class="y1 w">5</b></div>
<div class="q"><b class="y0">33018</b><b class="y1 w">8</b></div>
<div class="q"><b class="y0">33017</b><b class="y1 w">36</b></div>
 </div>
</div>

<!-- RTY WINDOW -->
<div class="frame" style="left:1614px;top:70px;width:252px;height:1248px"></div>
<div class="ico" style="left:1627px;top:82px"></div>
<div class="ttl" style="left:1645px;top:80px;width:106px">RTYZ23_FUT_CME ...</div>
<div class="wb" style="left:1755px;top:79px;width:31px">&#9644;</div>
<div class="wb" style="left:1790px;top:79px;width:30px">&#9635;</div>
<div class="wb" style="left:1824px;top:79px;width:31px">&#10005;</div>
<div class="g" style="left:1624px;top:100px;width:230px;height:1213px;letter-spacing:0">
 <div class="cb" style="left:34px;width:38px;background:#000050"></div>
 <div class="cb" style="left:151px;width:40px;background:#900000"></div>
 <div class="abs" style="left:151px;top:0;width:40px;height:29px;background:#a00000;color:#ff7070;font-size:15px;line-height:28px;text-align:center">Sell</div>
 <div class="abs" style="left:34px;top:0;width:38px;height:28px;color:#66ff66;font-size:15px;line-height:28px;text-align:center">Buy</div>
 <div class="v" style="left:0"></div><div class="v" style="left:33px"></div><div class="v" style="left:72px"></div><div class="v" style="left:111px"></div><div class="v" style="left:150px"></div><div class="v" style="left:191px"></div>
 <div class="rows" style="top:20px">
<div class="q"><b class="t0" style="top:3px">0.9</b><b class="t4 w sv" style="top:9px;line-height:18px">21</b></div>
<div class="q"><b class="t0">0.8</b><b class="t4 w sv">19</b></div>
<div class="q"><b class="t0">0.7</b><b class="t2 rd">1</b><b class="t4 w sv">40</b></div>
<div class="q"><b class="t0">0.6</b><b class="t4 w sv">21</b></div>
<div class="q"><b class="t0">0.5</b><b class="t2 rd">23</b><b class="t4 w sv">22</b></div>
<div class="q"><b class="t0">0.4</b><b class="t4 w sv">26</b></div>
<div class="q"><b class="t0">0.3</b><b class="t2 rd">2</b><b class="t4 w sv">27</b></div>
<div class="q"><b class="t0">0.2</b><b class="t2 rd">1</b><b class="t4 w sv">26</b></div>
<div class="q"><b class="t0">0.1</b><b class="t4 w sv">25</b></div>
<div class="q"><b class="t0">0.0</b><b class="t2 rd">1</b><b class="t4 w sv">29</b></div>
<div class="q"><b class="t0">9.9</b><b class="t4 w sv">24</b></div>
<div class="q"><b class="t0">9.8</b><b class="t2 rd">1</b><b class="t4 w sv">31</b></div>
<div class="q"><b class="t0">9.7</b><b class="t2 rd">1</b><b class="t4 w sv">33</b></div>
<div class="q"><b class="t0">9.6</b><b class="t4 w sv">29</b></div>
<div class="q"><b class="t0">9.5</b><b class="t2 rd">1</b><b class="t4 w sv">28</b></div>
<div class="q"><b class="t0">9.4</b><b class="t2 rd">1</b><b class="t4 w sv">29</b></div>
<div class="q"><b class="t0">9.3</b><b class="t4 w sv">34</b></div>
<div class="q"><b class="t0">9.2</b><b class="t2 rd">1</b><b class="t4 w sv">34</b></div>
<div class="q"><b class="t0">9.1</b><b class="t4 w sv">32</b></div>
<div class="q" style="border-bottom:3px solid #000"><b class="t0">9.0</b><b class="t2 rd">1</b><b class="t4 w sv">35</b></div>
<div class="q"><b class="t0">8.9</b><b class="t4 w sv">30</b></div>
<div class="q"><b class="t0">8.8</b><b class="t4 w sv">29</b></div>
<div class="q"><b class="t0">8.7</b><b class="t4 w sv">22</b></div>
<div class="q"><b class="t0">8.6</b><b class="t2 rd">4</b><b class="t4 w sv">31</b></div>
<div class="q"><b class="t0">8.5</b><b class="t4 w sv">27</b></div>
<div class="q"><b class="t0">8.4</b><b class="t2 rd">2</b><b class="t4 w sv">27</b></div>
<div class="q"><b class="t0">8.3</b><b class="t4 w sv">31</b></div>
<div class="q"><b class="t0">8.2</b><b class="t4 w sv">29</b></div>
<div class="q"><b class="t0">8.1</b><b class="t4 w sv">120</b></div>
<div class="q"><b class="t0">8.0</b><b class="t2 rd">3</b><b class="t4 w sv">27</b></div>
<div class="q"><b class="t0">7.9</b><b class="t2 rd">4</b><b class="t4 w sv">23</b></div>
<div class="q"><s style="left:113px;width:35px;top:3px;bottom:5px;background:#fff"></s><b class="t0">7.8</b><b class="t2 rd">1</b><b class="t3">2</b><b class="t4 w sv">13</b></div>
<div class="q"><s style="left:0;width:32px;top:3px;bottom:5px;background:#ffff00"></s><s style="left:74px;width:36px;top:3px;bottom:5px;background:#ff8080"></s><s style="left:193px;width:35px;top:3px;bottom:5px;background:#808080"></s><b class="t0">7.7</b><b class="t2 rd">3</b><b class="t4 w sv">4</b><b class="t5">3</b></div>
<div class="q"><b class="t0">7.6</b><b class="t1 w">7</b><b class="t3 nv">1</b></div>
<div class="q"><b class="t0">7.5</b><b class="t1 w">43</b><b class="t3 nv">24</b></div>
<div class="q"><b class="t0">7.4</b><b class="t1 w">19</b><b class="t3 nv">1</b></div>
<div class="q"><b class="t0">7.3</b><b class="t1 w">26</b></div>
<div class="q"><b class="t0">7.2</b><b class="t1 w">24</b><b class="t3 nv">2</b></div>
<div class="q"><b class="t0">7.1</b><b class="t1 w">27</b></div>
<div class="q"><b class="t0">7.0</b><b class="t1 w">28</b><b class="t3 nv">2</b></div>
<div class="q"><b class="t0">6.9</b><b class="t1 w">21</b><b class="t3 nv">5</b></div>
 </div>
</div>

<div class="abs" style="left:0;top:1318px;width:1876px;height:31px;background:#f0f0f0"></div>
<div class="tab" style="left:0;width:205px;background:#0a78d7;color:#fff">ESZ23_FUT_CME [CBV] #3</div>
<div class="tab" style="left:205px;width:209px">NQZ23_FUT_CME [CBV] #1</div>
<div class="tab" style="left:414px;width:217px">RTYZ23_FUT_CME [CBV] #2</div>
<div class="tab" style="left:631px;width:209px">YMZ23_FUT_CME [CBV] #4</div>
<div class="tab" style="left:840px;width:240px">ESZ23_FUT_CME [CV]&nbsp; Daily #5</div>
</body></html>
